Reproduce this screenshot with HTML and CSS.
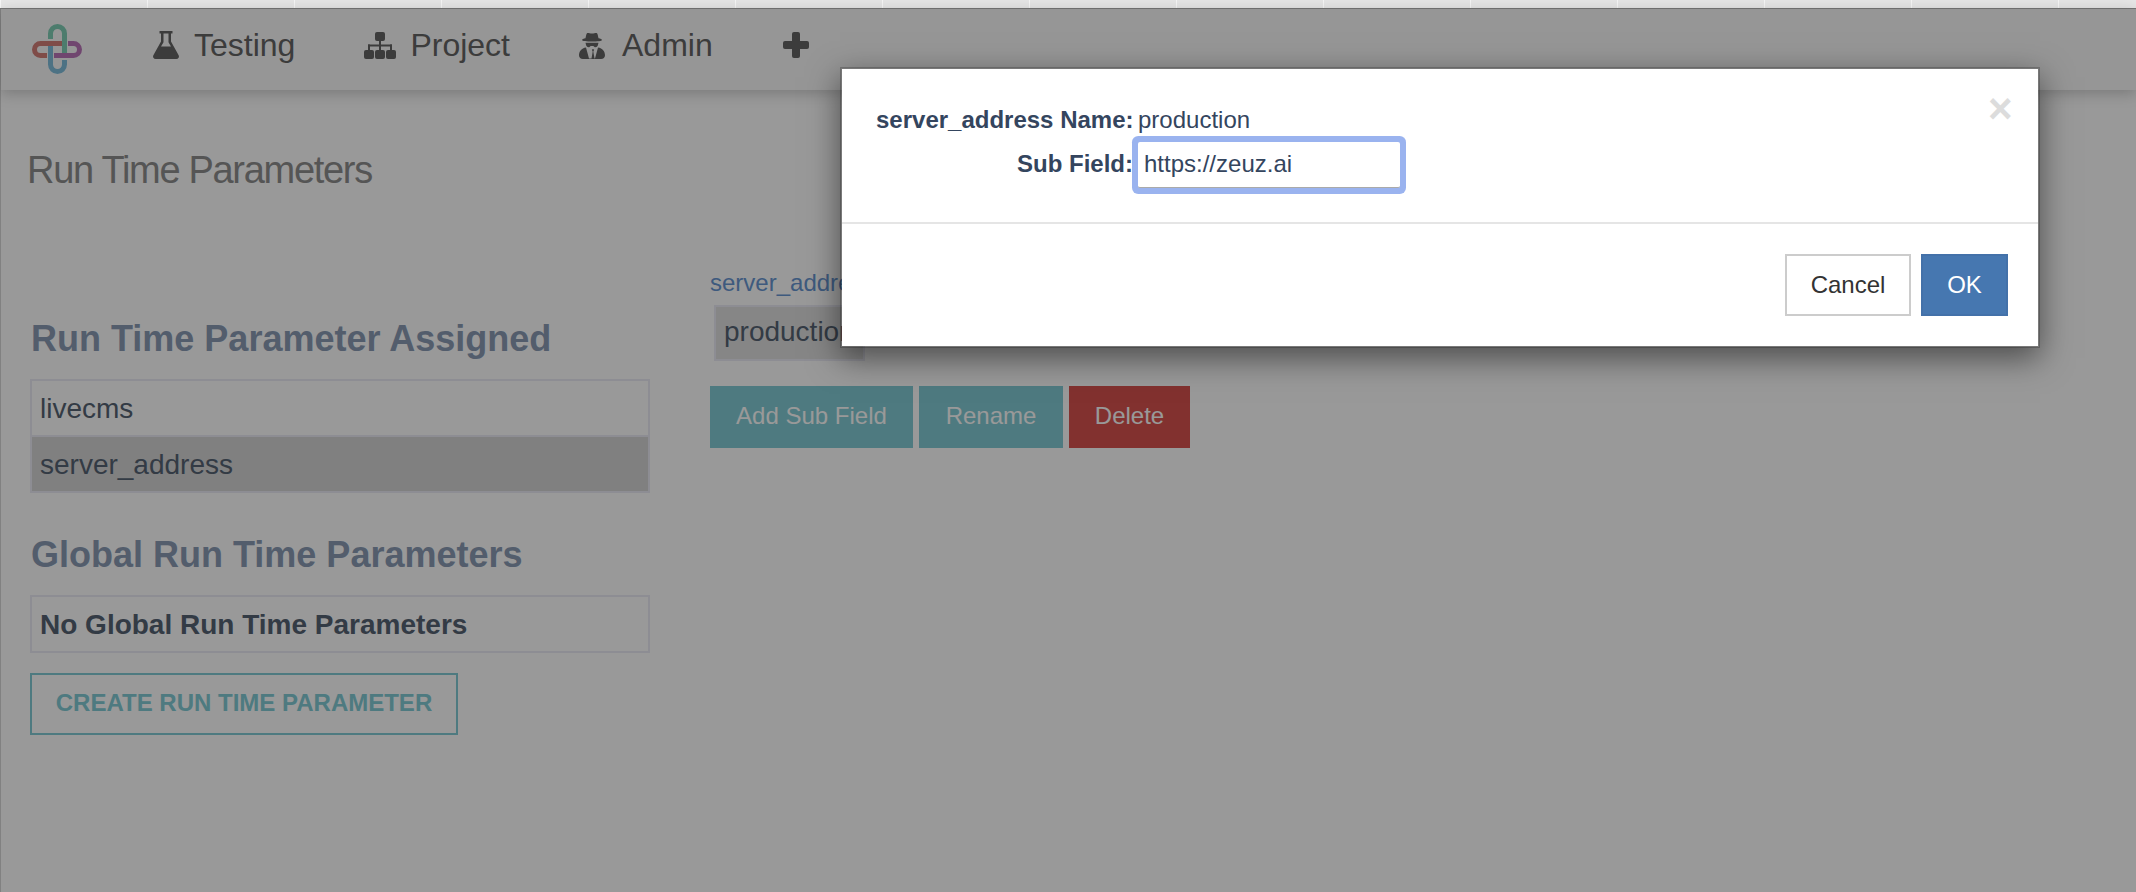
FILE: index.html
```html
<!DOCTYPE html>
<html lang="en">
<head>
    <meta charset="UTF-8">
    <title>Run Time Parameters</title>
    <link rel="stylesheet" href="styles.css">
</head>
<body>
    <div class="tab-strip"></div>

    <div class="page">
        <nav class="navbar">
            <svg class="logo" viewBox="0 0 50 50" fill="none" stroke-width="5">
                <path d="M18.5 15V9.5a7 7 0 0 1 14 0V30" stroke="#80cfb6"/>
                <path d="M18.5 20V40.5a7 7 0 0 0 14 0V36" stroke="#80bfdd"/>
                <path d="M30 19.5H8.500a6 6 0 0 0 0 12H15" stroke="#d47f78"/>
                <path d="M22 31.500H41.500a6 6 0 0 0 0-12H36" stroke="#bb75ba"/>
            </svg>
            <a class="nav-link">
                <svg class="icon-flask" viewBox="0 0 26 28"><path fill-rule="evenodd" d="M6.500 0h13v2.500H18v8L25.500 24a2.600 2.600 0 0 1-2.200 4H2.700a2.600 2.600 0 0 1-2.200-4L8 10.500v-8H6.500zM10.500 2.500v8.700L8 15.500h10l-2.500-4.300V2.500z"/></svg>
                Testing
            </a>
            <a class="nav-link nav-project">
                <svg class="icon-sitemap" viewBox="0 0 32 27"><rect x="11" y="0" width="10" height="9" rx="2"/><rect x="15" y="9" width="2" height="9"/><rect x="4" y="12.500" width="24" height="2"/><rect x="4" y="12.500" width="2" height="6"/><rect x="26" y="12.500" width="2" height="6"/><rect x="0" y="18" width="10" height="9" rx="2"/><rect x="11" y="18" width="10" height="9" rx="2"/><rect x="22" y="18" width="10" height="9" rx="2"/></svg>
                Project
            </a>
            <a class="nav-link nav-admin">
                <svg class="icon-secret" viewBox="0 0 26 27"><path d="M8 1.200c1-.8 2.500.3 5 .3s4-1.100 5-.3c.7.600 1.200 3.600 1.500 5.100 2 .4 3.500 1 3.500 1.600 0 1-4.500 1.600-10 1.600S3 8.900 3 7.900c0-.6 1.500-1.200 3.500-1.600.3-1.500.8-4.500 1.500-5.100z"/><path d="M6.500 10.800h13l-.7 2.600a2.500 2.500 0 0 1-2.400 1.800h-.6L14.300 14h-2.600l-1.500 1.200h-.6a2.500 2.500 0 0 1-2.400-1.800z"/><path fill-rule="evenodd" d="M7 15.500c-4.500.6-7 4-7 7.800C0 25.700 1.500 27 4 27h18c2.500 0 4-1.300 4-3.700 0-3.800-2.500-7.200-7-7.800l-3 11h-.5l-1.200-7 .9-1.800-1.200-.6-1.200.6.900 1.800-1.200 7H10z"/></svg>
                Admin
            </a>
            <a class="nav-link nav-plus">
                <svg class="icon-plus" viewBox="0 0 26 26"><rect x="9" y="0" width="8" height="26" rx="2"/><rect x="0" y="9" width="26" height="8" rx="2"/></svg>
            </a>
        </nav>

        <main class="content">
            <h1 class="page-title">Run Time Parameters</h1>

            <div class="columns">
                <section class="left-col">
                    <h2 class="section-title">Run Time Parameter Assigned</h2>
                    <ul class="param-list">
                        <li class="param-item">livecms</li>
                        <li class="param-item active">server_address</li>
                    </ul>

                    <h2 class="section-title global-title">Global Run Time Parameters</h2>
                    <ul class="param-list">
                        <li class="param-item empty">No Global Run Time Parameters</li>
                    </ul>

                    <button class="btn-create">CREATE RUN TIME PARAMETER</button>
                </section>

                <section class="right-col">
                    <label class="field-label">server_address Name</label>
                    <div class="sub-fields">
                        <div class="sub-field">production</div>
                    </div>
                    <div class="field-actions">
                        <button class="btn btn-teal">Add Sub Field</button>
                        <button class="btn btn-teal">Rename</button>
                        <button class="btn btn-red">Delete</button>
                    </div>
                </section>
            </div>
        </main>

        <div class="overlay"></div>
    </div>

    <div class="modal">
        <button class="modal-close">×</button>
        <div class="modal-body">
            <span class="form-label">server_address Name:</span>
            <span class="form-value">production</span>
            <label class="form-label form-label-input" for="subField">Sub Field:</label>
            <input class="form-input" id="subField" type="text" value="https://zeuz.ai">
        </div>
        <div class="modal-footer">
            <button class="btn-modal btn-cancel">Cancel</button>
            <button class="btn-modal btn-ok">OK</button>
        </div>
    </div>
</body>
</html>
```

FILE: styles.css
```css
body {
    font-family: "Liberation Sans", Arial, sans-serif;
    background-color: #fff;
    margin: 0;
    padding: 0;
    height: 892px;
    overflow: hidden;
}
.tab-strip {
    height: 8px;
    background-color: #e6e6e6;
    background-image: linear-gradient(to right, #e6e6e6 146px, #f6f6f6 146px);
    background-size: 147px 100%;
    background-position: 1px 0;
    border-bottom: 1px solid #777;
}
.page {
    position: relative;
    height: 883px;
    border-left: 1px solid #d8d8d8;
}
.overlay {
    position: absolute;
    inset: 0 0 0 -1px;
    background: rgba(0, 0, 0, 0.4);
}
.navbar {
    display: flex;
    align-items: flex-start;
    gap: 69px;
    height: 66px;
    padding: 15px 0 0 31px;
    background: #fbfbfb;
    box-shadow: 0 3px 14px rgba(0, 0, 0, 0.22);
}
.logo {
    width: 50px;
    height: 50px;
    margin-right: 2px;
}
.nav-link {
    display: flex;
    align-items: center;
    gap: 15px;
    margin-top: 5px;
    height: 32px;
    font-size: 32px;
    line-height: 32px;
    color: #646464;
}
.nav-link svg {
    fill: #646464;
}
.nav-project {
    gap: 14px;
}
.nav-admin {
    gap: 17px;
}
.nav-plus {
    margin-left: 1px;
}
.icon-flask {
    width: 26px;
    height: 28px;
}
.icon-sitemap {
    width: 32px;
    height: 27px;
}
.icon-secret {
    width: 26px;
    height: 27px;
}
.icon-plus {
    width: 26px;
    height: 26px;
}
.content {
    padding: 60px 0 0 29px;
}
.page-title {
    margin: 0 0 70px -3px;
    font-size: 38px;
    font-weight: normal;
    line-height: 40px;
    letter-spacing: -1.3px;
    color: #8e8e8e;
}
.columns {
    display: flex;
    gap: 60px;
}
.left-col {
    width: 620px;
    padding-top: 57px;
}
.section-title {
    margin: 0 0 19px 1px;
    font-size: 36px;
    line-height: 43px;
    color: #8a9bb5;
}
.global-title {
    margin-top: 40px;
}
.param-list {
    list-style: none;
    margin: 0;
    padding: 0;
    border: 2px solid #ebebf5;
}
.param-item {
    height: 54px;
    padding-left: 8px;
    font-size: 28px;
    line-height: 56px;
    color: #566373;
}
.param-item + .param-item {
    border-top: 2px solid #ebebf5;
}
.param-item.active {
    background: #d5d5d5;
}
.param-item.empty {
    font-weight: bold;
}
.btn-create {
    display: block;
    width: 428px;
    height: 62px;
    margin-top: 20px;
    padding: 0 0 3px;
    border: 2px solid #82ccd5;
    background: none;
    font-family: inherit;
    font-size: 24px;
    font-weight: bold;
    color: #82ccd5;
}
.right-col {
    display: flex;
    flex-direction: column;
    align-items: flex-start;
}
.field-label {
    height: 28px;
    margin-top: 9px;
    font-size: 24px;
    line-height: 28px;
    color: #6896d2;
}
.sub-fields {
    margin: 8px 0 0 4px;
}
.sub-field {
    width: 139px;
    height: 52px;
    padding-left: 8px;
    border: 2px solid #ebebf5;
    background: #e0e0e0;
    font-size: 28px;
    line-height: 50px;
    color: #566373;
}
.field-actions {
    display: flex;
    gap: 6px;
    margin-top: 25px;
}
.btn {
    height: 62px;
    padding: 0 0 2px;
    border: none;
    font-family: inherit;
    font-size: 24px;
    color: #fff;
}
.btn-teal {
    background: #82ccd5;
    width: 203px;
}
.btn-teal + .btn-teal {
    width: 144px;
}
.btn-red {
    background: #d9534f;
    width: 121px;
}
.modal {
    position: absolute;
    left: 840px;
    top: 67px;
    width: 1196px;
    border: 2px solid rgba(0, 0, 0, 0.2);
    background: #fff;
    background-clip: padding-box;
    box-shadow: 0 10px 30px rgba(0, 0, 0, 0.5);
}
.modal-close {
    position: absolute;
    top: 27px;
    right: 28px;
    width: 22px;
    height: 26px;
    padding: 0;
    border: none;
    background: none;
    font-family: inherit;
    font-size: 42px;
    font-weight: bold;
    line-height: 26px;
    color: #dcdcdc;
}
.modal-body {
    display: grid;
    grid-template-columns: 257px 262px;
    grid-template-rows: 30px 46px;
    column-gap: 5px;
    row-gap: 7px;
    align-items: center;
    height: 117px;
    padding: 36px 0 0 34px;
    border-bottom: 2px solid #e5e5e5;
    font-size: 24px;
    line-height: 30px;
    color: #34455e;
}
.form-label {
    font-weight: bold;
    text-align: right;
    white-space: nowrap;
}
.form-label-input {
    padding-bottom: 2px;
}
.form-input {
    box-sizing: border-box;
    width: 262px;
    height: 46px;
    padding: 0 6px 2px;
    border: none;
    border-bottom: 1px solid #aaa;
    border-radius: 2px;
    box-shadow: 0 0 0 6px #9ab3ef;
    font-family: inherit;
    font-size: 24px;
    color: #34455e;
    outline: none;
}
.modal-footer {
    display: flex;
    justify-content: flex-end;
    gap: 10px;
    padding: 30px;
}
.btn-modal {
    box-sizing: border-box;
    height: 62px;
    padding: 0;
    font-family: inherit;
    font-size: 24px;
}
.btn-cancel {
    width: 126px;
    border: 2px solid #ccc;
    background: #fff;
    color: #333;
}
.btn-ok {
    width: 87px;
    border: 2px solid #4371a9;
    background: #4677b0;
    color: #fff;
}
```
